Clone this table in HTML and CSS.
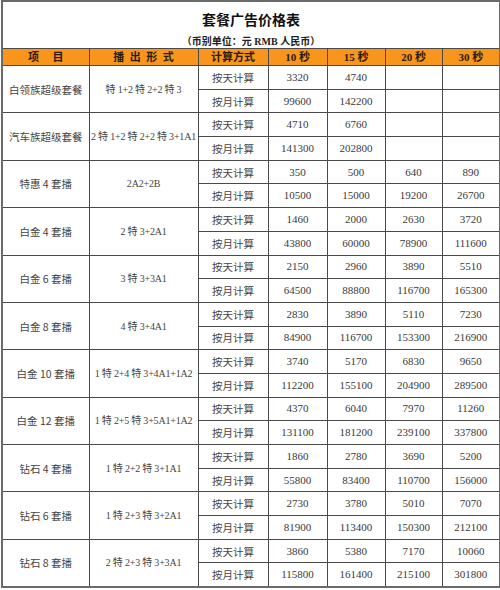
FILE: index.html
```html
<!DOCTYPE html>
<html lang="zh">
<head>
<meta charset="utf-8">
<link rel="stylesheet" href="styles.css">
</head>
<body>
<table class="sheet">
  <colgroup>
    <col class="c1"><col class="c2"><col class="c3"><col class="c4"><col class="c5"><col class="c6"><col class="c7">
  </colgroup>
  <tr class="title-row"><td colspan="7" class="title">套餐广告价格表</td></tr>
  <tr class="sub-row"><td colspan="7" class="subtitle">（币别单位：元 RMB 人民币）</td></tr>
  <tr class="head">
    <th>项&nbsp;&nbsp;&nbsp;&nbsp;&nbsp;目</th><th>播&nbsp;&nbsp;出&nbsp;&nbsp;形&nbsp;&nbsp;式</th><th>计算方式</th><th>10 秒</th><th>15 秒</th><th>20 秒</th><th>30 秒</th>
  </tr>
  <tr><td rowspan="2" class="cn">白领族超级套餐</td><td rowspan="2" class="mix">特 1+2 特 2+2 特 3</td><td class="cn">按天计算</td><td>3320</td><td>4740</td><td></td><td></td></tr>
  <tr><td class="cn">按月计算</td><td>99600</td><td>142200</td><td></td><td></td></tr>
  <tr><td rowspan="2" class="cn">汽车族超级套餐</td><td rowspan="2" class="mix">2 特 1+2 特 2+2 特 3+1A1</td><td class="cn">按天计算</td><td>4710</td><td>6760</td><td></td><td></td></tr>
  <tr><td class="cn">按月计算</td><td>141300</td><td>202800</td><td></td><td></td></tr>
  <tr><td rowspan="2" class="cn">特惠 4 套播</td><td rowspan="2" class="mix">2A2+2B</td><td class="cn">按天计算</td><td>350</td><td>500</td><td>640</td><td>890</td></tr>
  <tr><td class="cn">按月计算</td><td>10500</td><td>15000</td><td>19200</td><td>26700</td></tr>
  <tr><td rowspan="2" class="cn">白金 4 套播</td><td rowspan="2" class="mix">2 特 3+2A1</td><td class="cn">按天计算</td><td>1460</td><td>2000</td><td>2630</td><td>3720</td></tr>
  <tr><td class="cn">按月计算</td><td>43800</td><td>60000</td><td>78900</td><td>111600</td></tr>
  <tr><td rowspan="2" class="cn">白金 6 套播</td><td rowspan="2" class="mix">3 特 3+3A1</td><td class="cn">按天计算</td><td>2150</td><td>2960</td><td>3890</td><td>5510</td></tr>
  <tr><td class="cn">按月计算</td><td>64500</td><td>88800</td><td>116700</td><td>165300</td></tr>
  <tr><td rowspan="2" class="cn">白金 8 套播</td><td rowspan="2" class="mix">4 特 3+4A1</td><td class="cn">按天计算</td><td>2830</td><td>3890</td><td>5110</td><td>7230</td></tr>
  <tr><td class="cn">按月计算</td><td>84900</td><td>116700</td><td>153300</td><td>216900</td></tr>
  <tr><td rowspan="2" class="cn">白金 10 套播</td><td rowspan="2" class="mix">1 特 2+4 特 3+4A1+1A2</td><td class="cn">按天计算</td><td>3740</td><td>5170</td><td>6830</td><td>9650</td></tr>
  <tr><td class="cn">按月计算</td><td>112200</td><td>155100</td><td>204900</td><td>289500</td></tr>
  <tr><td rowspan="2" class="cn">白金 12 套播</td><td rowspan="2" class="mix">1 特 2+5 特 3+5A1+1A2</td><td class="cn">按天计算</td><td>4370</td><td>6040</td><td>7970</td><td>11260</td></tr>
  <tr><td class="cn">按月计算</td><td>131100</td><td>181200</td><td>239100</td><td>337800</td></tr>
  <tr><td rowspan="2" class="cn">钻石 4 套播</td><td rowspan="2" class="mix">1 特 2+2 特 3+1A1</td><td class="cn">按天计算</td><td>1860</td><td>2780</td><td>3690</td><td>5200</td></tr>
  <tr><td class="cn">按月计算</td><td>55800</td><td>83400</td><td>110700</td><td>156000</td></tr>
  <tr><td rowspan="2" class="cn">钻石 6 套播</td><td rowspan="2" class="mix">1 特 2+3 特 3+2A1</td><td class="cn">按天计算</td><td>2730</td><td>3780</td><td>5010</td><td>7070</td></tr>
  <tr><td class="cn">按月计算</td><td>81900</td><td>113400</td><td>150300</td><td>212100</td></tr>
  <tr><td rowspan="2" class="cn">钻石 8 套播</td><td rowspan="2" class="mix">2 特 2+3 特 3+3A1</td><td class="cn">按天计算</td><td>3860</td><td>5380</td><td>7170</td><td>10060</td></tr>
  <tr><td class="cn">按月计算</td><td>115800</td><td>161400</td><td>215100</td><td>301800</td></tr>
</table>
</body>
</html>
```
FILE: styles.css
```css
html, body {
  margin: 0;
  padding: 0;
  background: #ffffff;
}
.sheet {
  margin: 0 0 0 1px;
  width: 498px;
  table-layout: fixed;
  border-collapse: collapse;
  border: 2px solid #6a6a6a;
  font-family: "Liberation Serif", "Noto Sans CJK SC", serif;
  font-size: 11px;
  color: #3a3a3a;
}
.c1 { width: 87px; }
.c2 { width: 109px; }
.c3 { width: 70px; }
.c4 { width: 59px; }
.c5 { width: 58px; }
.c6 { width: 57px; }
.c7 { width: 58px; }
.sheet td, .sheet th {
  border: 1px solid #4a4a4a;
  text-align: center;
  vertical-align: middle;
  padding: 0;
  height: 22.7px;
  line-height: 13px;
  white-space: nowrap;
  overflow: hidden;
}
.sheet .title-row td, .sheet .sub-row td {
  border: none;
}
.title {
  font-family: "Noto Sans CJK SC", sans-serif;
  font-size: 14px;
  font-weight: bold;
  color: #111111;
  height: 30px !important;
  padding-top: 2px !important;
}
.subtitle {
  font-family: "Liberation Serif", "Noto Sans CJK SC", serif;
  font-size: 10px;
  font-weight: bold;
  color: #222222;
  height: 14px !important;
  text-align: center;
}
.head th {
  background: #f8951d;
  color: #2a1a0a;
  font-family: "Liberation Serif", "Noto Sans CJK SC", serif;
  font-size: 11px;
  font-weight: bold;
  height: 16px;
}
.cn {
  font-family: "Noto Sans CJK SC", sans-serif;
  font-size: 10.5px;
  color: #444444;
}
.mix {
  font-family: "Liberation Serif", "Noto Sans CJK SC", serif;
  font-size: 10px;
  letter-spacing: -0.2px;
  color: #444444;
}
```
